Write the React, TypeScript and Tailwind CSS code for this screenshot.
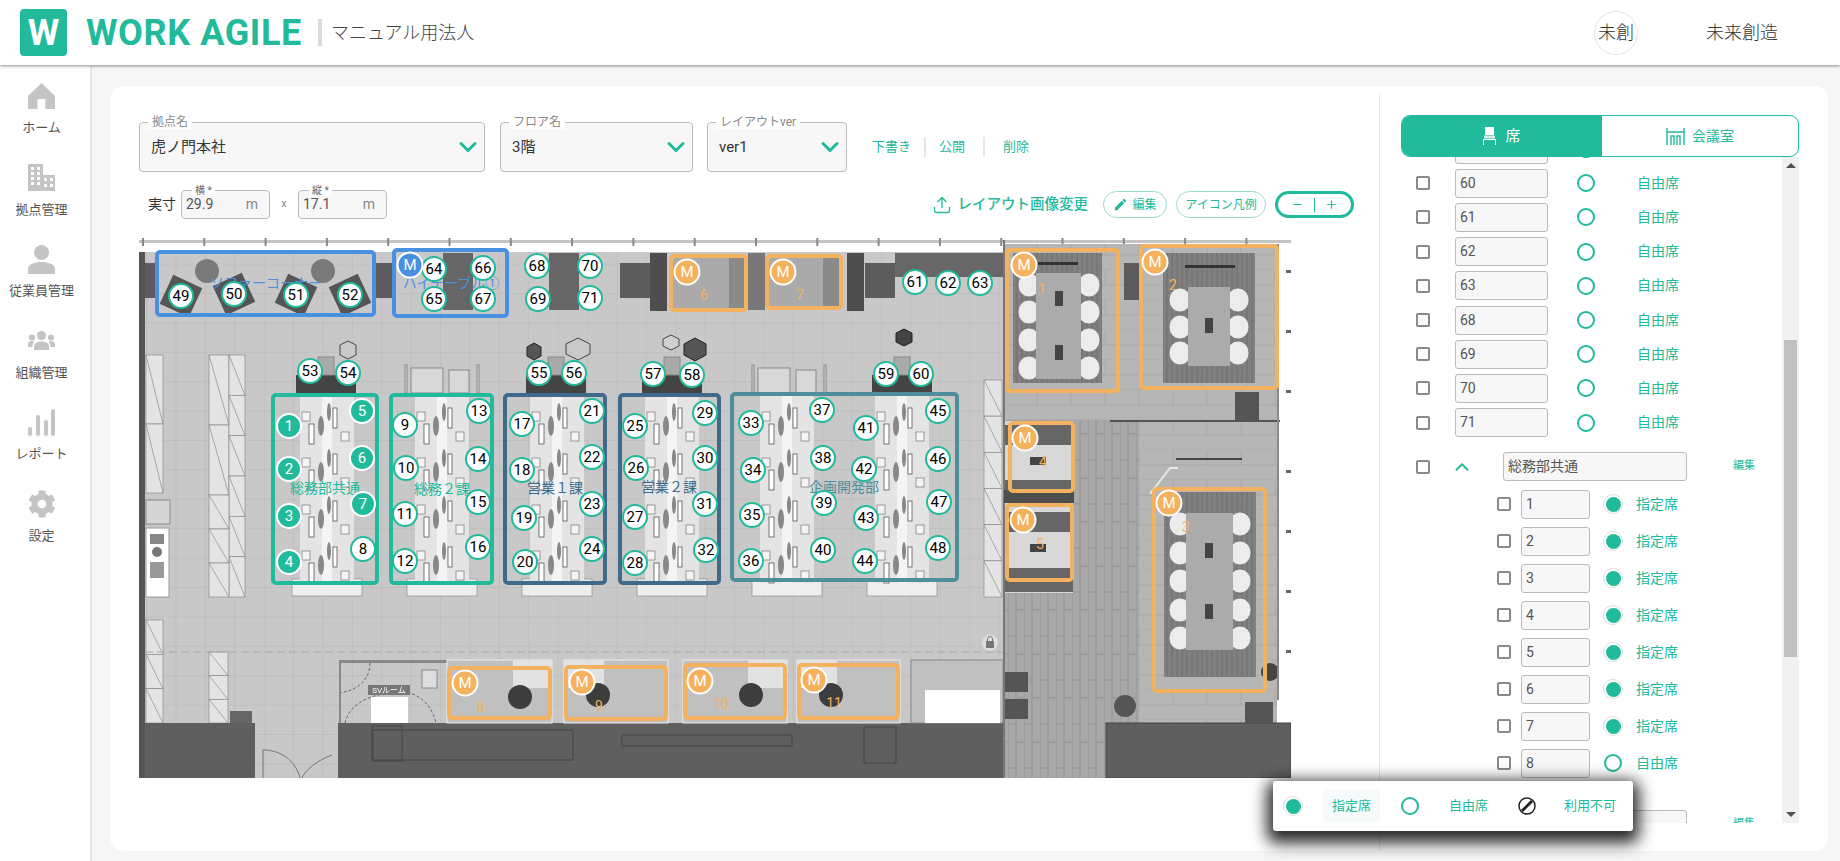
import { ChevronDown, ChevronUp, Minus, Plus, Upload } from 'lucide-react';
import { FaCog } from 'react-icons/fa';
import { MdEdit } from 'react-icons/md';

const teal = '#21ba9b';

type Pin = { n: string; x: number; y: number; fill?: boolean };
type Box = { x: number; y: number; r: number; b: number; color: string };

// all map coordinates are page coordinates, the map starts at 139,238
const pins: Pin[] = [
  { n: '49', x: 181, y: 296 }, { n: '50', x: 234, y: 294 }, { n: '51', x: 296, y: 295 }, { n: '52', x: 350, y: 295 },
  { n: '64', x: 434, y: 269 }, { n: '66', x: 483, y: 268 }, { n: '65', x: 434, y: 299 }, { n: '67', x: 483, y: 299 },
  { n: '68', x: 537, y: 266 }, { n: '70', x: 590, y: 266 }, { n: '69', x: 538, y: 299 }, { n: '71', x: 590, y: 298 },
  { n: '61', x: 915, y: 282 }, { n: '62', x: 948, y: 283 }, { n: '63', x: 980, y: 283 },
  { n: '53', x: 310, y: 371 }, { n: '54', x: 348, y: 373 }, { n: '55', x: 539, y: 373 }, { n: '56', x: 574, y: 373 },
  { n: '57', x: 653, y: 374 }, { n: '58', x: 692, y: 375 }, { n: '59', x: 886, y: 374 }, { n: '60', x: 921, y: 374 },
  { n: '1', x: 289, y: 426, fill: true }, { n: '2', x: 289, y: 469, fill: true }, { n: '3', x: 289, y: 516, fill: true },
  { n: '4', x: 289, y: 562, fill: true }, { n: '5', x: 362, y: 411, fill: true }, { n: '6', x: 362, y: 458, fill: true },
  { n: '7', x: 363, y: 504, fill: true }, { n: '8', x: 363, y: 549 },
  { n: '9', x: 405, y: 425 }, { n: '10', x: 406, y: 468 }, { n: '11', x: 405, y: 514 }, { n: '12', x: 405, y: 561 },
  { n: '13', x: 479, y: 411 }, { n: '14', x: 478, y: 459 }, { n: '15', x: 478, y: 502 }, { n: '16', x: 478, y: 547 },
  { n: '17', x: 522, y: 424 }, { n: '18', x: 522, y: 470 }, { n: '19', x: 524, y: 518 }, { n: '20', x: 525, y: 562 },
  { n: '21', x: 592, y: 411 }, { n: '22', x: 592, y: 457 }, { n: '23', x: 592, y: 504 }, { n: '24', x: 592, y: 549 },
  { n: '25', x: 635, y: 426 }, { n: '26', x: 636, y: 468 }, { n: '27', x: 635, y: 517 }, { n: '28', x: 635, y: 563 },
  { n: '29', x: 705, y: 413 }, { n: '30', x: 705, y: 458 }, { n: '31', x: 705, y: 504 }, { n: '32', x: 706, y: 550 },
  { n: '33', x: 751, y: 423 }, { n: '34', x: 753, y: 470 }, { n: '35', x: 752, y: 515 }, { n: '36', x: 751, y: 561 },
  { n: '37', x: 822, y: 410 }, { n: '38', x: 823, y: 458 }, { n: '39', x: 824, y: 503 }, { n: '40', x: 823, y: 550 },
  { n: '41', x: 866, y: 428 }, { n: '42', x: 864, y: 469 }, { n: '43', x: 866, y: 518 }, { n: '44', x: 865, y: 561 },
  { n: '45', x: 938, y: 411 }, { n: '46', x: 938, y: 459 }, { n: '47', x: 939, y: 502 }, { n: '48', x: 938, y: 548 },
];

const orange = '#f5b25e';
const boxes: Box[] = [
  { x: 155, y: 250, r: 376, b: 317, color: '#4a90e2' },
  { x: 392, y: 248, r: 509, b: 318, color: '#4a90e2' },
  { x: 271, y: 393, r: 379, b: 585, color: teal },
  { x: 389, y: 393, r: 494, b: 585, color: teal },
  { x: 503, y: 393, r: 607, b: 585, color: '#3f6a8a' },
  { x: 618, y: 393, r: 721, b: 585, color: '#3f6a8a' },
  { x: 730, y: 392, r: 959, b: 582, color: '#4e8f9b' },
  { x: 669, y: 254, r: 748, b: 312, color: orange },
  { x: 765, y: 254, r: 843, b: 310, color: orange },
  { x: 1005, y: 248, r: 1120, b: 393, color: orange },
  { x: 1139, y: 244, r: 1279, b: 390, color: orange },
  { x: 1008, y: 421, r: 1075, b: 493, color: orange },
  { x: 1005, y: 503, r: 1074, b: 582, color: orange },
  { x: 1152, y: 487, r: 1267, b: 693, color: orange },
  { x: 447, y: 666, r: 552, b: 720, color: orange },
  { x: 564, y: 665, r: 668, b: 721, color: orange },
  { x: 683, y: 663, r: 787, b: 720, color: orange },
  { x: 797, y: 663, r: 900, b: 720, color: orange },
];

const mPins = [
  { x: 410, y: 265, bg: 'bg-[#4a90e2]' },
  { x: 687, y: 272, bg: 'bg-[#f5b25e]' }, { x: 783, y: 272, bg: 'bg-[#f5b25e]' },
  { x: 1024, y: 265, bg: 'bg-[#f5b25e]' }, { x: 1155, y: 262, bg: 'bg-[#f5b25e]' },
  { x: 1025, y: 438, bg: 'bg-[#f5b25e]' }, { x: 1023, y: 520, bg: 'bg-[#f5b25e]' }, { x: 1169, y: 503, bg: 'bg-[#f5b25e]' },
  { x: 465, y: 683, bg: 'bg-[#f5b25e]' }, { x: 582, y: 682, bg: 'bg-[#f5b25e]' },
  { x: 700, y: 681, bg: 'bg-[#f5b25e]' }, { x: 814, y: 680, bg: 'bg-[#f5b25e]' },
];

const mapLabels = [
  { t: 'ソファーコーナー', x: 266, y: 283, c: 'text-[#4a90e2]' },
  { t: 'ハイテーブル①', x: 451, y: 283, c: 'text-[#4a90e2]' },
  { t: '総務部共通', x: 325, y: 488, c: 'text-[#21ba9b]' },
  { t: '総務２課', x: 442, y: 489, c: 'text-[#21ba9b]' },
  { t: '営業１課', x: 555, y: 488, c: 'text-[#3f6a8a]' },
  { t: '営業２課', x: 669, y: 487, c: 'text-[#3f6a8a]' },
  { t: '企画開発部', x: 844, y: 487, c: 'text-[#4e8f9b]' },
  { t: '6', x: 704, y: 295, c: 'text-[#f5b25e]' }, { t: '7', x: 800, y: 295, c: 'text-[#f5b25e]' },
  { t: '1', x: 1042, y: 289, c: 'text-[#f5b25e]' }, { t: '2', x: 1173, y: 285, c: 'text-[#f5b25e]' },
  { t: '4', x: 1043, y: 462, c: 'text-[#f5b25e]' }, { t: '5', x: 1040, y: 544, c: 'text-[#f5b25e]' },
  { t: '3', x: 1186, y: 527, c: 'text-[#f5b25e]' }, { t: '8', x: 481, y: 707, c: 'text-[#f5b25e]' },
  { t: '9', x: 599, y: 706, c: 'text-[#f5b25e]' }, { t: '10', x: 721, y: 704, c: 'text-[#f5b25e]' },
  { t: '11', x: 834, y: 703, c: 'text-[#f5b25e]' },
];

const islands = [300, 415, 530, 645, 760, 875];
const deskRows = [404, 450, 497, 543];

function Cabinet({ x, y, w, h, cells }: { x: number; y: number; w: number; h: number; cells: number }) {
  const ch = h / cells;
  return (
    <g fill="#e4e4e4" stroke="#8c8c8c" strokeWidth="0.7">
      {Array.from({ length: cells }).map((_, i) => (
        <g key={i}>
          <rect x={x} y={y + i * ch} width={w} height={ch} />
          <line x1={x} y1={y + i * ch} x2={x + w} y2={y + (i + 1) * ch} />
        </g>
      ))}
    </g>
  );
}

function FloorPlan() {
  return (
    <svg width="1152" height="540" viewBox="0 0 1152 540" className="absolute left-0 top-0 blur-[0.4px]">
      <defs>
        <pattern id="grid" width="29.4" height="29.4" patternUnits="userSpaceOnUse">
          <rect width="29.4" height="29.4" fill="#c8c8c8" />
          <path d="M29.4 0V29.4M0 29.4H29.4" stroke="#b7b7b7" strokeWidth="1" />
        </pattern>
        <pattern id="wood" width="16" height="44" patternUnits="userSpaceOnUse">
          <rect width="16" height="44" fill="#a8a8a8" />
          <path d="M0 0V44M8 0V44M0 20H8M8 38H16" stroke="#939393" strokeWidth="1" />
        </pattern>
        <pattern id="stone" width="34" height="30" patternUnits="userSpaceOnUse">
          <rect width="34" height="30" fill="#b6b6b6" />
          <path d="M0 30H34M17 0V15M0 15H34" stroke="#a8a8a8" strokeWidth="1" />
        </pattern>
        <pattern id="carpet" width="10" height="10" patternUnits="userSpaceOnUse">
          <rect width="10" height="10" fill="#808080" />
          <path d="M2 0V10M7 0V10" stroke="#6f6f6f" strokeWidth="1" />
        </pattern>
      </defs>
      <g transform="translate(-139 -238)">
        <rect x="139" y="238" width="1152" height="540" fill="#fff" />
        <rect x="139" y="252" width="868" height="526" fill="url(#grid)" />
        <rect x="139" y="240" width="1152" height="3" fill="#c4c4c4" />
        {Array.from({ length: 19 }).map((_, i) => (
          <rect key={i} x={142 + i * 61.3} y="238" width="2" height="8" fill="#888" />
        ))}
        <rect x="139" y="252" width="6" height="526" fill="#555" />

        {/* top wall band */}
        <rect x="145" y="263" width="10" height="35" fill="#5c5c5c" />
        <rect x="376" y="263" width="16" height="35" fill="#5c5c5c" />
        <rect x="620" y="263" width="30" height="35" fill="#5c5c5c" />
        <rect x="650" y="253" width="17" height="58" fill="#4e4e4e" />
        <rect x="847" y="253" width="17" height="58" fill="#4e4e4e" />
        <rect x="865" y="263" width="30" height="35" fill="#5c5c5c" />
        <rect x="895" y="253" width="108" height="24" fill="#676767" />
        <rect x="748" y="253" width="17" height="57" fill="#777" />
        <rect x="671" y="256" width="75" height="54" fill="#aaa" />
        <rect x="767" y="256" width="74" height="52" fill="#aaa" />
        <rect x="729" y="256" width="17" height="54" fill="#8a8a8a" />
        <rect x="823" y="256" width="18" height="52" fill="#8a8a8a" />
        <rect x="443" y="253" width="30" height="57" fill="#666" />
        <rect x="549" y="253" width="30" height="57" fill="#666" />

        {/* sofa corner */}
        <circle cx="207" cy="271" r="12" fill="#7a7a7a" />
        <circle cx="323" cy="271" r="12" fill="#7a7a7a" />
        {[[181, 296, 25], [234, 294, -25], [296, 295, 25], [350, 295, -25]].map(([x, y, a]) => (
          <rect key={x} x={x - 16} y={y - 16} width="32" height="32" fill="#555" transform={`rotate(${a} ${x} ${y})`} />
        ))}

        {/* planters */}
        <polygon points="348,341 356,345 356,355 348,359 340,355 340,345" fill="#c9c9c9" stroke="#444" />
        <polygon points="534,343 541,347 541,356 534,360 527,356 527,347" fill="#555" stroke="#222" />
        <polygon points="578,338 590,344 590,354 578,360 566,354 566,344" fill="#c9c9c9" stroke="#444" />
        <polygon points="671,335 679,339 679,346 671,350 663,346 663,339" fill="#d0d0d0" stroke="#444" />
        <polygon points="695,338 706,344 706,355 695,361 684,355 684,344" fill="#555" stroke="#222" />
        <polygon points="904,329 912,333 912,342 904,346 896,342 896,333" fill="#444" stroke="#222" />

        {/* storage */}
        <Cabinet x={146} y={355} w={17} h={138} cells={2} />
        <Cabinet x={209} y={355} w={20} h={140} cells={2} />
        <Cabinet x={229} y={355} w={16} h={242} cells={6} />
        <Cabinet x={209} y={495} w={20} h={102} cells={3} />
        <Cabinet x={146} y={620} w={17} h={103} cells={3} />
        <Cabinet x={209} y={652} w={19} h={71} cells={3} />
        <Cabinet x={984} y={380} w={18} h={217} cells={6} />
        <rect x="146" y="500" width="24" height="24" fill="#d5d5d5" stroke="#888" />
        <rect x="146" y="528" width="23" height="69" fill="#fff" stroke="#999" />
        <rect x="150" y="534" width="14" height="10" fill="#888" />
        <circle cx="157" cy="552" r="5" fill="#777" />
        <rect x="150" y="562" width="14" height="16" fill="#999" />
        <rect x="230" y="711" width="22" height="12" fill="#666" />

        {/* printers and desk backs */}
        {[296, 526, 642, 872].map((x) => (
          <g key={x}>
            <rect x={x} y="375" width="60" height="18" fill="#444" />
            <rect x={x + 22} y="357" width="16" height="18" fill="#aaa" stroke="#888" />
          </g>
        ))}
        {[405, 752].map((x) => (
          <g key={x} fill="#d8d8d8" stroke="#888">
            <rect x={x} y="365" width="2" height="28" />
            <rect x={x + 6} y="368" width="32" height="25" />
            <rect x={x + 44} y="370" width="20" height="23" />
            <rect x={x + 72} y="365" width="2" height="28" />
          </g>
        ))}

        {/* desks */}
        {islands.map((x) => (
          <g key={x}>
            <rect x={x - 8} y="579" width="70" height="17" fill="#eee" stroke="#8c8c8c" strokeWidth="0.7" />
            <rect x={x} y="393" width="54" height="190" fill="#e4e4e4" />
            <rect x={x + 22} y="393" width="10" height="190" fill="#f4f4f4" />
            {deskRows.map((y) => (
              <g key={y}>
                <rect x={x + 2} y={y + 8} width="8" height="9" fill="#f4f4f4" stroke="#777" strokeWidth="0.7" />
                <rect x={x + 9} y={y + 20} width="5" height="20" fill="#fff" stroke="#555" strokeWidth="0.8" />
                <ellipse cx={x + 21} cy={y + 22} rx="3" ry="10" fill="#888" />
                <rect x={x + 33} y={y + 4} width="4" height="20" fill="#fff" stroke="#555" strokeWidth="0.8" />
                <ellipse cx={x + 29} cy={y + 8} rx="2" ry="9" fill="#888" />
                <rect x={x + 41} y={y + 28} width="8" height="9" fill="#f4f4f4" stroke="#777" strokeWidth="0.7" />
              </g>
            ))}
          </g>
        ))}

        {/* lower wall */}
        <line x1="145" y1="652" x2="1003" y2="652" stroke="#aaa" strokeDasharray="8 4" />
        <rect x="145" y="723" width="110" height="55" fill="#5f5f5f" />
        <rect x="338" y="723" width="684" height="55" fill="#5f5f5f" />
        <rect x="373" y="730" width="200" height="30" fill="none" stroke="#444" />
        <rect x="372" y="726" width="30" height="35" fill="none" stroke="#444" />
        <rect x="622" y="735" width="170" height="11" fill="none" stroke="#444" />
        <rect x="864" y="727" width="32" height="36" fill="none" stroke="#444" />
        <path d="M263 778V750C285 750 297 765 300 778M332 755C318 760 305 770 302 778" fill="none" stroke="#777" />

        {/* sv room and booths */}
        <rect x="339" y="660" width="108" height="3" fill="#888" />
        <rect x="339" y="660" width="2" height="63" fill="#888" />
        <path d="M370 663C370 680 358 690 340 693M345 723C350 700 380 690 410 693C425 698 433 710 436 723" fill="none" stroke="#666" strokeDasharray="3 2" />
        <rect x="371" y="697" width="37" height="26" fill="#fff" />
        <rect x="368" y="685" width="42" height="10" fill="#777" />
        <text x="389" y="693" fontSize="8" fill="#fff" textAnchor="middle">SVルーム</text>
        <rect x="422" y="670" width="15" height="18" fill="#ddd" stroke="#888" />
        {[[447, 552], [564, 668], [683, 787], [797, 900]].map(([a, b]) => (
          <rect key={a} x={a} y="660" width={b - a} height="63" fill="#c0c0c0" stroke="#eee" strokeWidth="1" />
        ))}
        {[[513, 660, 39], [564, 660, 40], [748, 660, 39], [797, 660, 40]].map(([x, y, w]) => (
          <rect key={x} x={x} y={y} width={w} height="28" fill="#e2e2e2" />
        ))}
        {[[520, 697], [598, 695], [751, 695], [831, 695]].map(([x, y]) => (
          <circle key={x} cx={x} cy={y} r="12" fill="#3d3d3d" />
        ))}
        <rect x="911" y="660" width="92" height="63" fill="#c0c0c0" stroke="#888" />
        <rect x="925" y="690" width="75" height="33" fill="#fff" />
        <circle cx="990" cy="643" r="8" fill="#ddd" />
        <rect x="986" y="641" width="8" height="7" fill="#777" />
        <path d="M987.5 641v-2a2.5 2.5 0 0 1 5 0v2" fill="none" stroke="#777" />

        {/* right rooms */}
        <rect x="1004" y="244" width="273" height="176" fill="url(#stone)" />
        <rect x="1139" y="420" width="138" height="303" fill="url(#stone)" />
        <rect x="1004" y="420" width="135" height="358" fill="url(#wood)" />
        <rect x="1003" y="240" width="2" height="538" fill="#777" />
        <rect x="1124" y="263" width="15" height="37" fill="#5c5c5c" />
        <rect x="1235" y="392" width="24" height="28" fill="#555" />
        <rect x="1110" y="420" width="170" height="2" fill="#555" />
        <rect x="1005" y="421" width="68" height="72" fill="#d8d8d8" />
        <rect x="1005" y="425" width="68" height="20" fill="#666" />
        <rect x="1005" y="480" width="68" height="10" fill="#666" />
        <rect x="1004" y="490" width="70" height="13" fill="#4e4e4e" />
        <rect x="1005" y="503" width="68" height="90" fill="#d8d8d8" />
        <rect x="1005" y="512" width="68" height="20" fill="#666" />
        <rect x="1005" y="568" width="68" height="24" fill="#666" />
        <rect x="1030" y="457" width="16" height="8" fill="#444" />
        <rect x="1030" y="544" width="16" height="8" fill="#444" />
        <rect x="1005" y="672" width="23" height="20" fill="#555" />
        <rect x="1005" y="699" width="23" height="20" fill="#555" />
        <circle cx="1125" cy="706" r="11" fill="#555" />
        <rect x="1106" y="723" width="185" height="55" fill="#5f5f5f" />
        <rect x="1106" y="723" width="185" height="55" fill="none" stroke="#444" />
        <rect x="1245" y="702" width="28" height="21" fill="#555" />
        <path d="M1150 494L1170 468H1178" fill="none" stroke="#e8e8e8" strokeWidth="2" />
        <rect x="1176" y="458" width="66" height="2" fill="#444" />
        <circle cx="1270" cy="672" r="9" fill="#444" />
        <rect x="1277" y="244" width="2" height="456" fill="#888" />
        {[270, 330, 390, 470, 530, 590, 650].map((y) => (
          <rect key={y} x="1286" y={y} width="5" height="3" fill="#666" />
        ))}

        {/* meeting rooms */}
        <rect x="1013" y="253" width="89" height="130" fill="url(#carpet)" />
        {[285, 312, 340, 368].map((y) => (
          <g key={y} fill="#ececec" stroke="#666" strokeWidth="0.7">
            <ellipse cx="1029" cy={y} rx="11" ry="12" />
            <ellipse cx="1089" cy={y} rx="11" ry="12" />
          </g>
        ))}
        <rect x="1036" y="273" width="45" height="106" fill="#ababab" />
        <rect x="1055" y="291" width="8" height="15" fill="#444" />
        <rect x="1055" y="345" width="8" height="15" fill="#444" />
        <rect x="1038" y="262" width="40" height="3" fill="#333" />
        <rect x="1163" y="253" width="92" height="130" fill="url(#carpet)" />
        {[300, 327, 353].map((y) => (
          <g key={y} fill="#ececec" stroke="#666" strokeWidth="0.7">
            <ellipse cx="1180" cy={y} rx="11" ry="12" />
            <ellipse cx="1238" cy={y} rx="11" ry="12" />
          </g>
        ))}
        <rect x="1188" y="287" width="42" height="79" fill="#ababab" />
        <rect x="1205" y="318" width="8" height="15" fill="#444" />
        <rect x="1185" y="265" width="50" height="3" fill="#333" />
        <rect x="1164" y="492" width="92" height="185" fill="url(#carpet)" />
        {[524, 553, 581, 610, 638].map((y) => (
          <g key={y} fill="#ececec" stroke="#666" strokeWidth="0.7">
            <ellipse cx="1180" cy={y} rx="11" ry="12" />
            <ellipse cx="1240" cy={y} rx="11" ry="12" />
          </g>
        ))}
        <rect x="1186" y="513" width="47" height="137" fill="#ababab" />
        <rect x="1205" y="543" width="8" height="15" fill="#444" />
        <rect x="1205" y="604" width="8" height="15" fill="#444" />
      </g>
    </svg>
  );
}

function FloorMap() {
  return (
    <div className="relative w-[1152px] h-[540px] mt-[19px] overflow-hidden">
      <FloorPlan />
      {boxes.map((b) => (
        <div
          key={`${b.x}-${b.y}`}
          className="absolute border-[4px] rounded-[5px]"
          style={{ left: b.x - 139, top: b.y - 238, width: b.r - b.x, height: b.b - b.y, borderColor: b.color }}
        />
      ))}
      {mapLabels.map((l) => (
        <span
          key={l.t}
          className={`absolute -translate-x-1/2 -translate-y-1/2 text-[14px] whitespace-nowrap ${l.c}`}
          style={{ left: l.x - 139, top: l.y - 238 }}
        >
          {l.t}
        </span>
      ))}
      {pins.map((p) => (
        <div
          key={p.n}
          className={`absolute -translate-x-1/2 -translate-y-1/2 w-[26px] h-[26px] rounded-full border-2 flex items-center justify-center text-[15px] ${
            p.fill ? 'bg-[#21ba9b] border-white text-white' : 'bg-white border-[#21ba9b] text-black'
          }`}
          style={{ left: p.x - 139, top: p.y - 238 }}
        >
          {p.n}
        </div>
      ))}
      {mPins.map((p) => (
        <div
          key={`${p.x}-${p.y}`}
          className={`absolute -translate-x-1/2 -translate-y-1/2 w-[27px] h-[27px] rounded-full border-2 border-white flex items-center justify-center text-[15px] text-white ${p.bg}`}
          style={{ left: p.x - 139, top: p.y - 238 }}
        >
          M
        </div>
      ))}
    </div>
  );
}

const navIcons = {
  home: (
    <svg width="27" height="26" viewBox="0 0 27 26" fill="#c4c4c4">
      <path d="M13.5 0L27 13V26H17.5V16H9.5V26H0V13Z" />
    </svg>
  ),
  building: (
    <svg width="27" height="27" viewBox="0 0 27 27">
      <path d="M0 0H15V11H27V27H0Z" fill="#c4c4c4" />
      <g fill="#fff">
        {[3, 8, 13].map((y) => (
          <g key={y}>
            <rect x="3" y={y} width="3" height="3" />
            <rect x="9" y={y} width="3" height="3" />
          </g>
        ))}
        <rect x="3" y="18" width="3" height="3" />
        <rect x="9" y="18" width="3" height="3" />
        <rect x="16" y="14" width="3" height="3" />
        <rect x="22" y="14" width="3" height="3" />
        <rect x="16" y="20" width="3" height="3" />
        <rect x="22" y="20" width="3" height="3" />
      </g>
    </svg>
  ),
  person: (
    <svg width="27" height="29" viewBox="0 0 27 29" fill="#c4c4c4">
      <circle cx="13.5" cy="7.5" r="7.5" />
      <path d="M0 29V24C0 19 7 17 13.5 17S27 19 27 24V29Z" />
    </svg>
  ),
  group: (
    <svg width="27" height="19" viewBox="0 0 27 19" fill="#c4c4c4">
      <circle cx="13.5" cy="4.5" r="4.5" />
      <circle cx="4" cy="6.5" r="3" />
      <circle cx="23" cy="6.5" r="3" />
      <path d="M6 19V15C6 12 10 10.500 13.500 10.500S21 12 21 15V19Z" />
      <path d="M0 16V13C0 11 2 10 4 10C5 10 6 10.300 6.500 10.800C5 12 4.500 13.500 4.500 16Z" />
      <path d="M27 16V13C27 11 25 10 23 10C22 10 21 10.300 20.500 10.800C22 12 22.500 13.500 22.500 16Z" />
    </svg>
  ),
  report: (
    <svg width="27" height="27" viewBox="0 0 27 27" fill="#c4c4c4">
      <rect x="0" y="18" width="4" height="9" rx="2" />
      <rect x="8" y="6" width="4" height="21" rx="2" />
      <rect x="16" y="11" width="4" height="16" rx="2" />
      <rect x="23" y="0" width="4" height="27" rx="2" />
    </svg>
  ),
  gear: <FaCog size={28} color="#c4c4c4" />,
};

const navItems = [
  { label: 'ホーム', icon: navIcons.home },
  { label: '拠点管理', icon: navIcons.building },
  { label: '従業員管理', icon: navIcons.person },
  { label: '組織管理', icon: navIcons.group },
  { label: 'レポート', icon: navIcons.report },
  { label: '設定', icon: navIcons.gear },
];

function Sidebar() {
  return (
    <aside className="w-[92px] shrink-0 border-r-2 border-[#e6e6e6] bg-white pt-[16px] flex flex-col items-center pr-[7px]">
      {navItems.map((item) => (
        <div key={item.label} className="h-[81.6px] flex flex-col items-center">
          <div className="h-[30px] flex items-center justify-center">{item.icon}</div>
          <span className="mt-[9px] text-[13px] leading-[16px] text-[#555] whitespace-nowrap">{item.label}</span>
        </div>
      ))}
    </aside>
  );
}

function SelectField({ label, value, width }: { label: string; value: string; width: string }) {
  return (
    <div className={`relative h-[50px] rounded-[4px] border border-[#bbb] bg-[#f7f7f7] flex items-center justify-between pl-[11px] pr-[2px] ${width}`}>
      <span className="absolute -top-[7px] left-[8px] bg-white px-[4px] text-[12px] leading-[13px] text-[#888]">{label}</span>
      <span className="text-[15px] text-[#333]">{value}</span>
      <ChevronDown size={28} strokeWidth={2.6} color={teal} />
    </div>
  );
}

function SizeField({ label, value }: { label: string; value: string }) {
  return (
    <div className="relative w-[89px] h-[29px] rounded-[4px] border border-[#bbb] bg-[#f7f7f7] flex items-center justify-between px-[4px] pr-[11px]">
      <span className="absolute -top-[6px] left-[10px] bg-white px-[3px] text-[10px] leading-[11px] text-[#666]">{label}</span>
      <span className="text-[14px] text-[#555]">{value}</span>
      <span className="text-[14px] text-[#888]">m</span>
    </div>
  );
}

function OutlinedButton({ width, children }: { width: string; children: React.ReactNode }) {
  return (
    <div className={`h-[27px] rounded-full border border-[#9adccd] flex items-center justify-center gap-[4px] text-[12px] text-[#21ba9b] ${width}`}>
      {children}
    </div>
  );
}

function Toolbar() {
  return (
    <div className="flex items-center justify-between h-[29px] mt-[18px] pr-[25px]">
      <div className="flex items-center">
        <span className="ml-[9px] mr-[5px] text-[14px] text-[#333]">実寸</span>
        <SizeField label="横 *" value="29.9" />
        <span className="w-[28px] text-center text-[11px] text-[#888]">x</span>
        <SizeField label="縦 *" value="17.1" />
      </div>
      <div className="flex items-center">
        <Upload size={20} color={teal} strokeWidth={1.6} />
        <span className="ml-[6px] text-[14.5px] font-medium text-[#21ba9b]">レイアウト画像変更</span>
        <div className="ml-[15px]">
          <OutlinedButton width="w-[64px]">
            <MdEdit size={15} />
            編集
          </OutlinedButton>
        </div>
        <div className="ml-[9px]">
          <OutlinedButton width="w-[90px]">アイコン凡例</OutlinedButton>
        </div>
        <div className="ml-[9px] w-[79px] h-[27px] rounded-full border-[3px] border-[#21ba9b] flex items-center justify-around px-[8px]">
          <Minus size={13} color={teal} />
          <span className="h-[14px] w-px bg-[#21ba9b]" />
          <Plus size={13} color={teal} />
        </div>
      </div>
    </div>
  );
}

function FilledDot() {
  return (
    <div className="w-[20px] h-[20px] rounded-full border border-[#ddd] flex items-center justify-center shrink-0">
      <div className="w-[15px] h-[15px] rounded-full bg-[#21ba9b]" />
    </div>
  );
}

function EmptyDot() {
  return <div className="w-[18px] h-[18px] rounded-full border-[2px] border-[#21ba9b] shrink-0" />;
}

function Check() {
  return <div className="w-[14px] h-[14px] rounded-[2px] border-[2px] border-[#8a8a8a] shrink-0" />;
}

function SeatRow({ n }: { n: string }) {
  return (
    <div className="h-[34.2px] flex items-center pl-[15px]">
      <Check />
      <div className="ml-[25px] w-[93px] h-[29px] rounded-[3px] border border-[#bbb] bg-[#f7f7f7] flex items-center pl-[4px] text-[14px] text-[#555]">{n}</div>
      <div className="ml-[29px]"><EmptyDot /></div>
      <span className="ml-[42px] text-[14px] text-[#21ba9b]">自由席</span>
    </div>
  );
}

function ChildRow({ n, free }: { n: string; free?: boolean }) {
  return (
    <div className="h-[37px] flex items-center pl-[96px]">
      <Check />
      <div className="ml-[10px] w-[69px] h-[29px] rounded-[3px] border border-[#bbb] bg-[#f7f7f7] flex items-center pl-[4px] text-[14px] text-[#555]">{n}</div>
      <div className="ml-[13px] w-[20px] flex justify-center">{free ? <EmptyDot /> : <FilledDot />}</div>
      <span className="ml-[13px] text-[14px] text-[#21ba9b]">{free ? '自由席' : '指定席'}</span>
    </div>
  );
}

function GroupRow({ name }: { name: string }) {
  return (
    <div className="h-[30px] flex items-center pl-[15px]">
      <Check />
      <ChevronUp size={22} color={teal} className="ml-[21px]" />
      <div className="ml-[30px] w-[184px] h-[29px] rounded-[3px] border border-[#bbb] bg-[#f7f7f7] flex items-center pl-[4px] text-[14px] text-[#555]">{name}</div>
      <span className="ml-[46px] text-[11px] text-[#21ba9b]">編集</span>
    </div>
  );
}

function SeatPanel() {
  return (
    <div className="w-[449px] border-l border-[#e6e6e6] mt-[7px] pl-[21px] pt-[22px]">
      <div className="w-[398px] h-[42px] flex rounded-[9px] border border-[#21ba9b] relative z-10 bg-white">
        <div className="w-[200px] rounded-l-[8px] bg-[#21ba9b] flex items-center justify-center gap-[9px] text-white text-[15px]">
          <svg width="13" height="18" viewBox="0 0 13 18" fill="#fff">
            <rect x="2" y="0" width="9" height="8" />
            <rect x="1" y="8.500" width="11" height="3" opacity="0.8" />
            <path d="M0 12H13V18H12V13H1V18H0Z" />
          </svg>
          席
        </div>
        <div className="flex-1 flex items-center justify-center gap-[7px] text-[#21ba9b] text-[14px]">
          <svg width="19" height="17" viewBox="0 0 19 17" fill="none" stroke="#21ba9b" strokeWidth="1.400">
            <path d="M1 0V17M18 0V17M1 4H18" />
            <path d="M5 17V8H8V17M11 17V8H14V17" />
          </svg>
          会議室
        </div>
      </div>
      <div className="w-[398px] h-[666px] flex overflow-hidden">
        <div className="w-[381px] overflow-hidden">
          <div className="-mt-[25px]">
            {['59', '60', '61', '62', '63', '68', '69', '70', '71'].map((n) => (
              <SeatRow key={n} n={n} />
            ))}
            <div className="mt-[12px]">
              <GroupRow name="総務部共通" />
            </div>
            <div className="mt-[4px]">
              {['1', '2', '3', '4', '5', '6', '7'].map((n) => (
                <ChildRow key={n} n={n} />
              ))}
              <ChildRow n="8" free />
            </div>
            <div className="mt-[28px]">
              <GroupRow name="" />
            </div>
          </div>
        </div>
        <div className="w-[17px] bg-[#f1f1f1] flex flex-col items-center relative">
          <span className="mt-[6px] w-0 h-0 border-x-[5px] border-x-transparent border-b-[5px] border-b-[#505050]" />
          <div className="mt-[172px] w-[13px] h-[317px] bg-[#c1c1c1]" />
          <span className="absolute bottom-[6px] w-0 h-0 border-x-[5px] border-x-transparent border-t-[5px] border-t-[#505050]" />
        </div>
      </div>
    </div>
  );
}

function Legend() {
  return (
    <div className="absolute left-[1163px] top-[695px] z-20 w-[360px] h-[50px] rounded-[3px] bg-white shadow-[0_6px_16px_6px_rgba(0,0,0,0.85)] flex items-center text-[13px] text-[#21ba9b]">
      <div className="ml-[10px]"><FilledDot /></div>
      <span className="ml-[20px] w-[57px] h-[32px] rounded-[3px] bg-[#f4fbfa] flex items-center justify-center">指定席</span>
      <div className="ml-[21px]"><EmptyDot /></div>
      <span className="ml-[30px]">自由席</span>
      <svg width="18" height="18" viewBox="0 0 18 18" className="ml-[30px]">
        <circle cx="9" cy="9" r="8" fill="#fff" stroke="#222" strokeWidth="1.500" />
        <line x1="4" y1="14" x2="14" y2="4" stroke="#222" strokeWidth="3" />
      </svg>
      <span className="ml-[28px]">利用不可</span>
    </div>
  );
}

export default function App() {
  return (
    <div className="w-[1840px] h-[861px] overflow-hidden bg-[#f6f6f6] font-['Roboto','Noto_Sans_CJK_JP',sans-serif]">
      <header className="relative z-10 h-[65px] bg-white shadow-[0_1px_3px_rgba(0,0,0,0.45)] flex items-center pl-[20px] pr-[62px]">
        <div className="w-[47px] h-[47px] rounded-[4px] bg-[#21ba9b] flex items-center justify-center text-white text-[36px] font-bold">W</div>
        <span className="ml-[19px] text-[36px] font-bold tracking-[0.6px] text-[#21ba9b] leading-none">WORK AGILE</span>
        <span className="ml-[16px] w-[4px] h-[27px] bg-[#dcdcdc]" />
        <span className="ml-[9px] text-[18px] font-light text-[#444]">マニュアル用法人</span>
        <div className="ml-auto w-[44px] h-[44px] rounded-full border border-[#e5e5e5] flex items-center justify-center text-[18px] font-light text-[#333]">未創</div>
        <span className="ml-[68px] text-[18px] font-light text-[#333]">未来創造</span>
      </header>
      <div className="flex h-[796px]">
        <Sidebar />
        <main className="pl-[18px] pt-[21px]">
          <div className="relative w-[1718px] h-[765px] rounded-[14px] bg-white flex">
            <div className="w-[1269px] pl-[29px] pt-[36px]">
              <div className="flex items-center">
                <SelectField label="拠点名" value="虎ノ門本社" width="w-[346px]" />
                <div className="ml-[15px]"><SelectField label="フロア名" value="3階" width="w-[193px]" /></div>
                <div className="ml-[14px]"><SelectField label="レイアウトver" value="ver1" width="w-[140px]" /></div>
                <div className="ml-[25px] flex items-center text-[13px] text-[#21ba9b]">
                  <span>下書き</span>
                  <span className="mx-[13px] h-[20px] w-[2px] bg-[#e6e6e6]" />
                  <span>公開</span>
                  <span className="mx-[18px] h-[20px] w-[2px] bg-[#e6e6e6]" />
                  <span>削除</span>
                </div>
              </div>
              <Toolbar />
              <FloorMap />
            </div>
            <SeatPanel />
            <Legend />
          </div>
        </main>
      </div>
    </div>
  );
}
